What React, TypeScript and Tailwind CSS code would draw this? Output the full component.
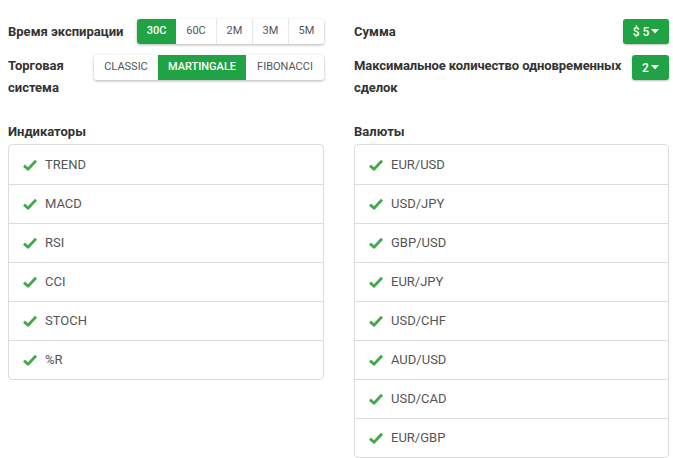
import { useState } from "react"

const GREEN = "bg-[#1fa345]"

const expiries = [
  { label: "30С", w: "w-[39px]" },
  { label: "60С", w: "w-[40px]" },
  { label: "2M", w: "w-[36px]" },
  { label: "3M", w: "w-[36px]" },
  { label: "5M", w: "w-[36px]" },
]

const systems = [
  { label: "CLASSIC", w: "w-[64px]" },
  { label: "MARTINGALE", w: "w-[88px]" },
  { label: "FIBONACCI", w: "w-[78px]" },
]

const indicators = ["TREND", "MACD", "RSI", "CCI", "STOCH", "%R"]
const currencies = ["EUR/USD", "USD/JPY", "GBP/USD", "EUR/JPY", "USD/CHF", "AUD/USD", "USD/CAD", "EUR/GBP"]

function Check() {
  return (
    <svg width="14" height="12" viewBox="0 0 14 12" className="shrink-0">
      <path d="M1 6.6 L5 10.2 L13 1.8" fill="none" stroke="#43a84b" strokeWidth="2.8" strokeLinejoin="round" />
    </svg>
  )
}

function Caret() {
  return (
    <svg width="8" height="5" viewBox="0 0 8 5" className="ml-[2px]">
      <path d="M0 0 L8 0 L4 4.5 Z" fill="#fff" />
    </svg>
  )
}

function Segmented({ items, active, onPick }: { items: { label: string; w: string }[]; active: number; onPick: (i: number) => void }) {
  return (
    <div className="flex h-[25px] shrink-0 overflow-hidden rounded-[3px] bg-white shadow-[0_1px_3px_rgba(0,0,0,0.3)]">
      {items.map((it, i) => (
        <button
          key={it.label}
          onClick={() => onPick(i)}
          className={`${it.w} flex h-full items-center justify-center text-[11px] ${
            i === active ? `${GREEN} font-medium text-white` : "text-[#555]"
          } ${i > 0 && i !== active && i - 1 !== active ? "border-l border-[#e6e6e6]" : ""}`}
        >
          {it.label}
        </button>
      ))}
    </div>
  )
}

function CheckList({ title, items }: { title: string; items: string[] }) {
  return (
    <div>
      <div className="text-[13px] font-bold leading-[22px] text-[#333]">{title}</div>
      <div className="mt-[1px] rounded-[4px] border border-[#dcdcdc] bg-white">
        {items.map((it, i) => (
          <div
            key={it}
            className={`flex h-[39px] items-center gap-[8px] pl-[14px] text-[13px] text-[#555] ${i > 0 ? "border-t border-[#dcdcdc]" : ""}`}
          >
            <Check />
            {it}
          </div>
        ))}
      </div>
    </div>
  )
}

export default function App() {
  const [exp, setExp] = useState(0)
  const [sys, setSys] = useState(1)

  return (
    <div className="min-h-[458px] bg-white pl-2 pr-1 pt-[19px]" style={{ fontFamily: "Roboto, 'Liberation Sans', sans-serif" }}>
      <div className="flex gap-[30px]">
        {/* left column */}
        <div className="w-[316px] shrink-0">
          <div className="flex items-center justify-between">
            <span className="text-[13px] font-bold text-[#333]">Время экспирации</span>
            <Segmented items={expiries} active={exp} onPick={setExp} />
          </div>
          <div className="mt-[11px] flex items-start justify-between gap-3">
            <span className="text-[13px] font-bold leading-[22px] text-[#333]">Торговая система</span>
            <Segmented items={systems} active={sys} onPick={setSys} />
          </div>
          <div className="mt-[22px]">
            <CheckList title="Индикаторы" items={indicators} />
          </div>
        </div>

        {/* right column */}
        <div className="w-[315px] shrink-0">
          <div className="flex items-center justify-between">
            <span className="text-[13px] font-bold text-[#333]">Сумма</span>
            <button className={`${GREEN} flex h-[25px] w-[46px] items-center justify-center rounded-[3px] text-[12px] font-medium text-white shadow-[0_1px_2px_rgba(0,0,0,0.25)]`}>
              $ 5<Caret />
            </button>
          </div>
          <div className="mt-[11px] flex items-start justify-between">
            <span className="text-[13px] font-bold leading-[22px] tracking-[-0.1px] text-[#333]">Максимальное количество одновременных сделок</span>
            <button className={`${GREEN} flex h-[25px] w-[37px] shrink-0 items-center justify-center rounded-[3px] text-[12px] font-medium text-white shadow-[0_1px_2px_rgba(0,0,0,0.25)]`}>
              2<Caret />
            </button>
          </div>
          <div className="mt-[22px]">
            <CheckList title="Валюты" items={currencies} />
          </div>
        </div>
      </div>
    </div>
  )
}
